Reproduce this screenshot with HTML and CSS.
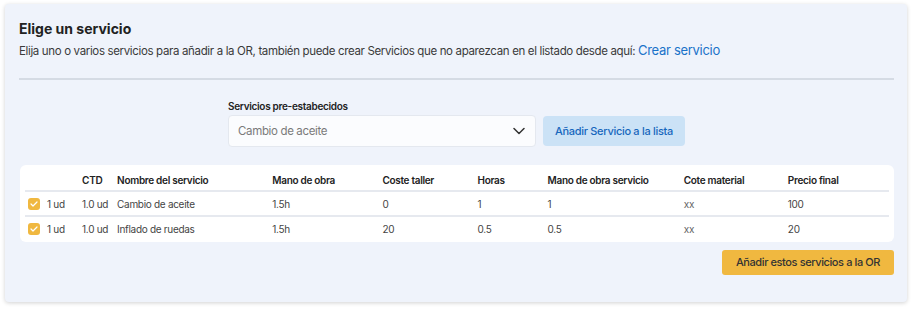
FILE: index.html
```html
<!DOCTYPE html>
<html lang="es">
<head>
    <meta charset="UTF-8" />
    <title>Elige un servicio</title>
    <link rel="stylesheet" href="styles.css">
</head>
<body>
    <div class="page">
        <section class="card">
            <h2 class="title">Elige un servicio</h2>
            <p class="intro">Elija uno o varios servicios para añadir a la OR, también puede crear Servicios que no aparezcan en el listado desde aquí: <a href="javascript:;" class="link">Crear servicio</a></p>
            <hr class="divider" />

            <div class="picker">
                <div class="field">
                    <label class="field-label">Servicios pre-estabecidos</label>
                    <div class="select">
                        <span>Cambio de aceite</span>
                        <svg width="12" height="8" viewBox="0 0 12 8"><path d="M1 1.5l5 5 5-5" fill="none" stroke="#333" stroke-width="1.5" stroke-linecap="round" stroke-linejoin="round"/></svg>
                    </div>
                </div>
                <a href="javascript:;" class="btn-add">Añadir Servicio a la lista</a>
            </div>

            <div class="table-box">
                <table class="services">
                    <colgroup>
                        <col style="width:57px"><col style="width:35px"><col style="width:155px">
                        <col style="width:110px"><col style="width:95px"><col style="width:70px">
                        <col style="width:136px"><col style="width:104px"><col style="width:101px">
                    </colgroup>
                    <thead>
                        <tr>
                            <th></th>
                            <th>CTD</th>
                            <th>Nombre del servicio</th>
                            <th>Mano de obra</th>
                            <th>Coste taller</th>
                            <th>Horas</th>
                            <th>Mano de obra servicio</th>
                            <th>Cote material</th>
                            <th>Precio final</th>
                        </tr>
                    </thead>
                    <tbody>
                        <tr>
                            <td class="first"><div class="qty"><span class="check"><svg width="8" height="6" viewBox="0 0 8 6"><path d="M1 3l2 2 4-4" fill="none" stroke="#fff" stroke-width="1.2" stroke-linecap="round" stroke-linejoin="round"/></svg></span>1 ud</div></td>
                            <td>1.0 ud</td>
                            <td>Cambio de aceite</td>
                            <td>1.5h</td>
                            <td>0</td>
                            <td>1</td>
                            <td>1</td>
                            <td class="muted">xx</td>
                            <td>100</td>
                        </tr>
                        <tr>
                            <td class="first"><div class="qty"><span class="check"><svg width="8" height="6" viewBox="0 0 8 6"><path d="M1 3l2 2 4-4" fill="none" stroke="#fff" stroke-width="1.2" stroke-linecap="round" stroke-linejoin="round"/></svg></span>1 ud</div></td>
                            <td>1.0 ud</td>
                            <td>Inflado de ruedas</td>
                            <td>1.5h</td>
                            <td>20</td>
                            <td>0.5</td>
                            <td>0.5</td>
                            <td class="muted">xx</td>
                            <td>20</td>
                        </tr>
                    </tbody>
                </table>
            </div>

            <div class="actions">
                <a href="javascript:;" class="btn-confirm">Añadir estos servicios a la OR</a>
            </div>
        </section>
    </div>
</body>
</html>
```

FILE: styles.css
```css
body{
    margin: 0;
    font-family: Inter, "Noto Sans", sans-serif;
    color: #333;
    background: #fff;
}
.page{
    padding: 4px 6px 9px 5px;
}
.card{
    background: #eff3fb;
    border-radius: 4px;
    box-shadow: 0 1px 4px rgba(0,0,0,.18);
    padding: 15px 13px 27px 14px;
}
.title{
    margin: 0;
    font-size: 14px;
    line-height: 20px;
    font-weight: 700;
    color: #222;
}
.intro{
    margin: 1px 0 0;
    font-size: 11.5px;
    letter-spacing: -0.35px;
    line-height: 20px;
    color: #3a3a3a;
}
.link{
    color: #1a72c9;
    font-size: 13px;
    letter-spacing: -0.3px;
    text-decoration: none;
}
.divider{
    margin: 17px 0 0;
    border: 0;
    border-top: 2px solid #d5dbe4;
}
.picker{
    display: flex;
    justify-content: center;
    align-items: flex-end;
    gap: 7px;
    margin-top: 19px;
}
.field-label{
    display: block;
    font-size: 10px;
    letter-spacing: -0.3px;
    line-height: 14px;
    font-weight: 600;
    color: #222;
    margin-bottom: 2px;
}
.select{
    width: 308px;
    height: 32px;
    box-sizing: border-box;
    background: #fbfcfe;
    border: 1px solid #e4e8ef;
    border-radius: 4px;
    display: flex;
    align-items: center;
    justify-content: space-between;
    padding: 0 10px 0 9px;
    font-size: 11.5px;
    letter-spacing: -0.35px;
    color: #7a7a7a;
}
.btn-add{
    width: 142px;
    height: 30px;
    line-height: 30px;
    margin-bottom: 1px;
    text-align: center;
    background: #cbe2f6;
    color: #1767bd;
    font-size: 11px;
    letter-spacing: -0.3px;
    font-weight: 500;
    border-radius: 4px;
    text-decoration: none;
    white-space: nowrap;
}
.table-box{
    margin: 18px 0 0 1px;
    background: #fff;
    border-radius: 6px;
    padding: 5px 5px 2px;
}
.services{
    width: 864px;
    border-collapse: collapse;
    table-layout: fixed;
    font-size: 10px;
    letter-spacing: -0.3px;
    color: #444;
}
.services th{
    text-align: left;
    font-weight: 600;
    color: #222;
    height: 20px;
    padding: 0;
}
.services td{
    height: 23px;
    padding: 0;
    border-top: 2px solid #e6e9ef;
}
.services td.first{
    padding-left: 3px;
}
.services td.muted{
    color: #666;
}
.qty{
    display: flex;
    align-items: center;
}
.check{
    display: flex;
    align-items: center;
    justify-content: center;
    width: 12px;
    height: 12px;
    background: #f0b840;
    border-radius: 3px;
    margin-right: 7px;
}
.actions{
    display: flex;
    justify-content: flex-end;
    margin-top: 8px;
}
.btn-confirm{
    width: 172px;
    height: 25px;
    line-height: 25px;
    text-align: center;
    background: #f0b840;
    color: #333;
    font-size: 11px;
    letter-spacing: -0.4px;
    font-weight: 500;
    border-radius: 3px;
    text-decoration: none;
    white-space: nowrap;
}
```
